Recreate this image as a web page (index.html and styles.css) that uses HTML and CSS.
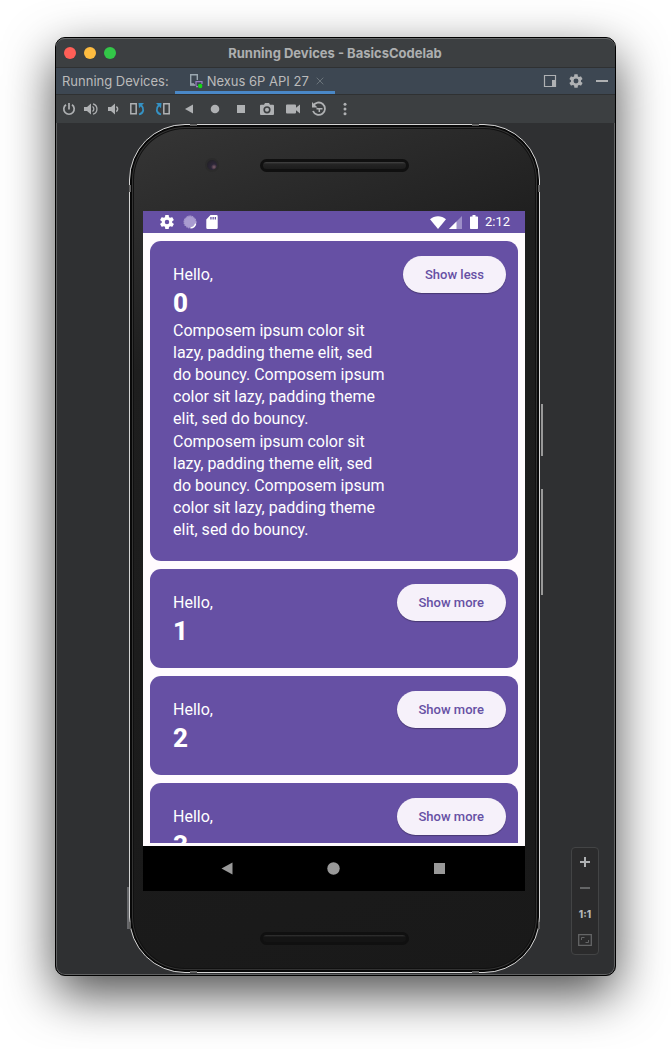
FILE: index.html
```
<!DOCTYPE html>
<html lang="en">
<head>
<meta charset="utf-8">
<title>Running Devices - BasicsCodelab</title>
<link rel="stylesheet" href="styles.css">
</head>
<body>
<main class="window">
  <header class="titlebar">
    <div class="lights">
      <button class="light close" aria-label="Close"></button>
      <button class="light minimize" aria-label="Minimize"></button>
      <button class="light maximize" aria-label="Maximize"></button>
    </div>
    <h1 class="title">Running Devices - BasicsCodelab</h1>
  </header>

  <div class="tabbar">
    <span class="tabbar-label">Running Devices:</span>
    <div class="tab">
      <svg class="tab-icon" width="15" height="16" viewBox="0 0 15 16" fill="none">
        <path d="M5 11H1.7V1.7H8.3V7" stroke="#9aa7b0" stroke-width="1.4"/>
        <path d="M1 11.2h5v1.6H1z" fill="#9aa7b0"/>
        <path d="M7 13V8.7h6V11M9 13.7H7" stroke="#9a7fc4" stroke-width="1.2"/>
        <circle cx="11.2" cy="13" r="2.2" fill="#14d814"/>
      </svg>
      <span>Nexus 6P API 27</span>
      <button class="tab-close" aria-label="Close tab">
        <svg width="8" height="8" viewBox="0 0 8 8"><path d="M.7.7l6.6 6.6M7.3.7L.7 7.3" stroke="#6b747b"/></svg>
      </button>
    </div>
    <div class="tabbar-actions">
      <button class="tool" aria-label="Window mode"><svg width="14" height="14" viewBox="0 0 14 14"><path d="M1.5 1.5h11v11h-11z" fill="none" stroke="#afb1b3" stroke-width="1.2"/><path d="M9 6h4v7H9z" fill="#afb1b3"/></svg></button>
      <button class="tool" aria-label="Settings"><svg width="16" height="16" viewBox="0 0 24 24"><path fill="#afb1b3" fill-rule="evenodd" d="M19.4 13c.1-.3.1-.7.1-1s0-.7-.1-1l2.1-1.6c.2-.2.2-.4.1-.6l-2-3.500c-.1-.2-.4-.3-.6-.2l-2.500 1a7 7 0 0 0-1.700-1L14.500 2.400c0-.2-.2-.4-.5-.4h-4c-.3 0-.5.2-.5.4l-.4 2.700a7 7 0 0 0-1.700 1l-2.500-1c-.2-.1-.5 0-.6.2l-2 3.500c-.1.2-.1.4.1.6L4.500 11v2l-2.100 1.600c-.2.200-.2.400-.1.600l2 3.500c.1.200.4.300.6.200l2.500-1c.5.400 1.100.7 1.700 1l.4 2.700c0 .2.200.4.5.4h4c.3 0 .5-.2.5-.4l.4-2.700a7 7 0 0 0 1.700-1l2.500 1c.2.100.5 0 .6-.2l2-3.500c.1-.2.1-.4-.1-.6zM12 15.700a3.700 3.700 0 1 1 0-7.400 3.700 3.700 0 0 1 0 7.400z"/></svg></button>
      <button class="tool" aria-label="Hide"><svg width="12" height="12" viewBox="0 0 12 12"><path d="M0 5h12v2H0z" fill="#afb1b3"/></svg></button>
    </div>
  </div>

  <div class="toolbar">
    <button class="tool compact" aria-label="Power"><svg width="14" height="14" viewBox="0 0 14 14" fill="none" stroke="#afb1b3" stroke-width="1.700"><path d="M7 1v6.500M4 2.800a5.200 5.200 0 1 0 6 0"/></svg></button>
    <button class="tool compact" aria-label="Volume up"><svg width="14" height="14" viewBox="0 0 14 14"><path d="M0 5h3l4-3.500v11L3 9H0z" fill="#afb1b3"/><path d="M8.500 4.500a3 3 0 0 1 0 5M9 1.800a5.400 5.400 0 0 1 0 10.400" fill="none" stroke="#afb1b3" stroke-width="1.300"/></svg></button>
    <button class="tool compact" aria-label="Volume down"><svg width="12" height="14" viewBox="0 0 12 14"><path d="M1 5h3l4-3.500v11L4 9H1z" fill="#afb1b3"/><path d="M9.300 4.500a3 3 0 0 1 0 5" fill="none" stroke="#afb1b3" stroke-width="1.500"/></svg></button>
    <button class="tool" aria-label="Rotate left"><svg width="16" height="14" viewBox="0 0 16 14" fill="none"><path d="M1.800 1.800h5.400v10H1.800z" stroke="#afb1b3" stroke-width="1.500"/><path d="M10 12.500c5-1.500 5.500-6 2-9.500" stroke="#3592c4" stroke-width="1.800"/><path d="M9.500 1h5.500L10 6.200z" fill="#3592c4"/></svg></button>
    <button class="tool" aria-label="Rotate right"><svg width="16" height="14" viewBox="0 0 16 14" fill="none"><path d="M8.800 1.800h5.400v10H8.800z" stroke="#afb1b3" stroke-width="1.500"/><path d="M6 12.500c-5-1.500-5.500-6-2-9.500" stroke="#3592c4" stroke-width="1.800"/><path d="M6.500 1H1l5 5.200z" fill="#3592c4"/></svg></button>
    <button class="tool" aria-label="Back"><svg width="10" height="10" viewBox="0 0 10 10"><path d="M9 .5v9L1 5z" fill="#afb1b3"/></svg></button>
    <button class="tool" aria-label="Home"><svg width="10" height="10" viewBox="0 0 10 10"><circle cx="5" cy="5" r="4.300" fill="#afb1b3"/></svg></button>
    <button class="tool" aria-label="Overview"><svg width="10" height="10" viewBox="0 0 10 10"><path d="M1 1h8v8H1z" fill="#afb1b3"/></svg></button>
    <button class="tool" aria-label="Take screenshot"><svg width="14" height="14" viewBox="0 0 14 14"><path fill="#afb1b3" fill-rule="evenodd" d="M1 2.800h3L5 1h4l1 1.800h3a1 1 0 0 1 1 1V12a1 1 0 0 1-1 1H1a1 1 0 0 1-1-1V3.800a1 1 0 0 1 1-1zM7 4.200a3.600 3.600 0 1 0 0 7.200 3.600 3.600 0 0 0 0-7.200z"/><circle cx="7" cy="7.800" r="2" fill="#afb1b3"/></svg></button>
    <button class="tool" aria-label="Record screen"><svg width="14" height="14" viewBox="0 0 14 14"><path fill="#afb1b3" d="M1 2.500h8a1 1 0 0 1 1 1v2.200l4-3.200v9L10 8.300v2.200a1 1 0 0 1-1 1H1a1 1 0 0 1-1-1v-7a1 1 0 0 1 1-1z"/></svg></button>
    <button class="tool" aria-label="Snapshots"><svg width="16" height="16" viewBox="0 0 16 16" fill="none" stroke="#afb1b3"><path d="M2.200 5A6.200 6.200 0 1 1 2 10" stroke-width="1.800"/><path d="M1 1v5.500h5.500z" fill="#afb1b3" stroke="none"/><path d="M5.500 7.800h6M8.300 7.800V11" stroke-width="1.500"/></svg></button>
    <button class="tool" aria-label="More"><svg width="4" height="14" viewBox="0 0 4 14" fill="#afb1b3"><circle cx="2" cy="2.300" r="1.500"/><circle cx="2" cy="7" r="1.500"/><circle cx="2" cy="11.700" r="1.500"/></svg></button>
  </div>

  <section class="stage">
    <div class="phone">
      <i class="side-key power"></i>
      <i class="side-key volume"></i>
      <i class="side-key sim"></i>
      <i class="antenna top left"></i><i class="antenna top right"></i>
      <i class="antenna bottom left"></i><i class="antenna bottom right"></i>
      <i class="seam top left"></i><i class="seam top right"></i>
      <i class="seam bottom left"></i><i class="seam bottom right"></i>
      <div class="bezel-top">
        <span class="camera"></span>
        <span class="speaker"></span>
      </div>
      <div class="screen">
        <div class="statusbar">
          <svg width="14" height="14" viewBox="2 2 20 20"><path fill="#fff" fill-rule="evenodd" d="M19.400 13c.1-.7.1-1.300 0-2l2.100-1.600c.2-.2.2-.4.1-.6l-2-3.500c-.1-.2-.4-.3-.6-.2l-2.500 1a7 7 0 0 0-1.700-1L14.500 2.400c0-.2-.2-.4-.5-.4h-4c-.3 0-.5.2-.5.4l-.4 2.700a7 7 0 0 0-1.700 1l-2.500-1c-.2-.1-.5 0-.6.2l-2 3.500c-.1.200-.1.400.1.600L4.500 11v2l-2.100 1.600c-.2.200-.2.400-.1.600l2 3.500c.1.200.4.300.6.200l2.500-1c.5.400 1.100.7 1.700 1l.4 2.700c0 .2.200.4.5.4h4c.3 0 .5-.2.500-.4l.4-2.700a7 7 0 0 0 1.700-1l2.500 1c.2.100.5 0 .6-.2l2-3.500c.1-.2.1-.4-.1-.6zM12 15.200a3.200 3.200 0 1 1 0-6.400 3.200 3.200 0 0 1 0 6.400z"/></svg>
          <svg width="14" height="14" viewBox="0 0 14 14"><circle cx="7" cy="7" r="5.800" fill="#a99bd0"/><circle cx="7" cy="7" r="6" fill="none" stroke="#d0c8e6" stroke-width="1" stroke-dasharray="1 1"/><path d="M12.700 8.500a6 6 0 0 1-5 4.400" fill="none" stroke="#fff" stroke-width="1.400"/></svg>
          <svg width="12" height="14" viewBox="0 0 12 14"><path fill="#fff" fill-rule="evenodd" d="M4.500 0H10.500a1.200 1.200 0 0 1 1.200 1.200v11.500a1.200 1.200 0 0 1-1.200 1.200h-9A1.200 1.200 0 0 1 .3 12.700V4.500zM4.300 2v2.500h1.300V2zM6.500 2v2.500h1.300V2zM8.700 2v2.500H10V2z"/></svg>
          <span class="status-right">
            <svg width="16" height="13" viewBox="0 0 16 13"><path fill="#fff" d="M8 13L0 3.200C4.500-.8 11.500-.8 16 3.200z"/></svg>
            <svg class="signal" width="13" height="13" viewBox="0 0 13 13"><path d="M13 0v13H0z" fill="#9d8fc8"/><path d="M7.500 5.500V13H0z" fill="#fff"/></svg>
            <svg class="battery" width="8" height="14" viewBox="0 0 8 14"><path fill="#fff" d="M2.500 0h3v1.400H7.300a.7.700 0 0 1 .7.700V13.300a.7.700 0 0 1-.7.700H.7a.7.700 0 0 1-.7-.7V2.100a.7.700 0 0 1 .7-.7h1.800z"/></svg>
            <span class="clock">2:12</span>
          </span>
        </div>
        <div class="list">
          <article class="card">
            <div class="card-text">
              <p>Hello,</p>
              <h2 class="number">0</h2>
              <p>Composem ipsum color sit lazy, padding theme elit, sed do bouncy. Composem ipsum color sit lazy, padding theme elit, sed do bouncy.</p>
              <p class="repeat">Composem ipsum color sit lazy, padding theme elit, sed do bouncy. Composem ipsum color sit lazy, padding theme elit, sed do bouncy.</p>
            </div>
            <button class="pill">Show less</button>
          </article>
          <article class="card">
            <div class="card-text"><p>Hello,</p><h2 class="number">1</h2></div>
            <button class="pill">Show more</button>
          </article>
          <article class="card">
            <div class="card-text"><p>Hello,</p><h2 class="number">2</h2></div>
            <button class="pill">Show more</button>
          </article>
          <article class="card">
            <div class="card-text"><p>Hello,</p><h2 class="number">3</h2></div>
            <button class="pill">Show more</button>
          </article>
        </div>
        <nav class="navbar">
          <button class="nav-key" aria-label="Back"><svg width="12" height="13" viewBox="0 0 12 13"><path d="M11.500.5v12L.5 6.500z" fill="#999"/></svg></button>
          <button class="nav-key" aria-label="Home"><svg width="13" height="13" viewBox="0 0 13 13"><circle cx="6.500" cy="6.500" r="6.200" fill="#999"/></svg></button>
          <button class="nav-key" aria-label="Overview"><svg width="11" height="11" viewBox="0 0 11 11"><path d="M0 0h11v11H0z" fill="#999"/></svg></button>
        </nav>
      </div>
      <div class="bezel-bottom"><span class="speaker"></span></div>
    </div>
    <div class="zoom">
      <button class="zoom-key" aria-label="Zoom in"><svg width="10" height="10" viewBox="0 0 10 10"><path d="M4 0h2v4h4v2H6v4H4V6H0V4h4z" fill="#afb1b3"/></svg></button>
      <button class="zoom-key" aria-label="Zoom out"><svg width="10" height="10" viewBox="0 0 10 10"><path d="M0 4h10v2H0z" fill="#646566"/></svg></button>
      <button class="zoom-key">1:1</button>
      <button class="zoom-key" aria-label="Fit to screen"><svg width="14" height="12" viewBox="0 0 14 12" fill="none" stroke="#646566"><path d="M.7.7h12.600v10.600H.7z" stroke-width="1.300"/><path d="M3.500 6V3.500H6.500M10.500 6v2.500H7.500"/></svg></button>
    </div>
  </section>
</main>
</body>
</html>
```
FILE: styles.css
```
* { box-sizing: border-box; }

body {
  margin: 0;
  height: 100vh;
  padding: 37px 55px 73px;
  background: #fff;
  font: 13px/16px Inter, "Liberation Sans", sans-serif;
  color: #bbb;
}

button {
  margin: 0;
  padding: 0;
  border: 0;
  background: none;
  font: inherit;
  color: inherit;
}

h1, h2, p { margin: 0; }
svg { display: block; flex: none; }

.window {
  display: flex;
  flex-direction: column;
  height: 100%;
  border: 1px solid #000;
  border-radius: 10px;
  background: #2f3032;
  box-shadow: 0 18px 50px rgba(0, 0, 0, .7), inset 0 0 0 1px #606162;
}

.titlebar {
  display: grid;
  grid-template-columns: 1fr auto 1fr;
  align-items: center;
  height: 30px;
  padding: 0 9px 0 8px;
  border-radius: 9px 9px 0 0;
  border-top: 1px solid #6a6c6d;
  border-bottom: 1px solid #2f3132;
  background: #3c3f41;
}
.lights { display: flex; gap: 8px; }
.light { width: 12px; height: 12px; border-radius: 50%; }
.close { background: #ff5f57; }
.minimize { background: #febc40; }
.maximize { background: #33c748; }
.title { font-size: 13px; font-weight: 700; color: #adafb0; }

.tabbar {
  display: flex;
  height: 27px;
  padding-left: 6px;
  border-bottom: 1px solid #2f3132;
  background: #3d4752;
}
.tabbar-label { align-self: center; }
.tab {
  display: flex;
  align-items: center;
  gap: 3px;
  margin-left: 6px;
  padding: 2px 11px 0 14px;
  border-bottom: 3px solid #4a88c7;
  white-space: nowrap;
}
.tab-close { margin-left: 4px; }
.tabbar-actions { display: flex; margin-left: auto; }

.toolbar {
  display: flex;
  height: 28px;
  padding-left: 2px;
  background: #3c3f41;
}
.tool {
  display: flex;
  align-items: center;
  justify-content: center;
  width: 26px;
}
.compact { width: 22px; }

.stage {
  position: relative;
  display: flex;
  flex: 1;
  min-height: 0;
  padding: 1px 75px 2px 73px;
}

.phone {
  position: relative;
  display: flex;
  flex: 1;
  flex-direction: column;
  min-width: 0;
  padding: 0 14px 0 13px;
  border: 1px solid #d4d4d4;
  border-radius: 56px;
  background: linear-gradient(160deg, #363636, #1e1e1e 25%, #191919);
  box-shadow: inset 0 0 0 2px #080808, inset 0 0 0 3px #333, inset 0 0 0 4px #111;
}
.side-key { position: absolute; background: #999; width: 2px; right: -4px; }
.power { top: 279px; height: 52px; }
.volume { top: 364px; height: 106px; }
.sim { right: auto; left: -3px; bottom: 43px; height: 42px; background: #66676a; }
.antenna, .seam { position: absolute; background: #606060; }
.antenna { width: 7px; height: 2px; }
.seam { width: 2px; height: 7px; }
.antenna.top { top: -1px; }
.antenna.bottom { bottom: -1px; }
.antenna.left { left: 60px; }
.antenna.right { right: 60px; }
.seam.top { top: 60px; }
.seam.bottom { bottom: 43px; }
.seam.left { left: -1px; }
.seam.right { right: -1px; }

.bezel-top, .bezel-bottom {
  display: grid;
  grid-template-columns: 1fr 149px 1fr;
  align-items: center;
  flex: none;
}
.bezel-top { height: 86px; padding-bottom: 6px; }
.bezel-bottom { height: 81px; padding-top: 14px; }
.speaker {
  grid-column: 2;
  height: 13px;
  border: 3px solid #101010;
  border-radius: 7px;
  background: linear-gradient(#444, #242424 30%, #1c1c1c);
}
.bezel-bottom .speaker { background: linear-gradient(#333, #141414 30%); }
.camera {
  justify-self: end;
  width: 14px;
  height: 14px;
  margin-right: 41px;
  border: 2px solid #2b2b2b;
  border-radius: 50%;
  background: radial-gradient(circle at 70% 70%, #80606c, #2c2638 30%, #202020);
}

.screen {
  display: flex;
  flex: 1;
  flex-direction: column;
  min-height: 0;
  background: #fffbfe;
  font-family: Roboto, "Noto Sans", sans-serif;
}
.statusbar {
  display: flex;
  align-items: center;
  gap: 9px;
  flex: none;
  height: 22px;
  padding: 0 15px 0 17px;
  background: #6650a4;
  color: #fff;
}
.status-right { display: flex; align-items: center; margin-left: auto; }
.clock { font-size: 13px; font-weight: 400; }
.signal { margin-left: 3px; }
.battery { margin: 0 7px 0 8px; }

.list {
  display: flex;
  flex: 1;
  flex-direction: column;
  gap: 8px;
  min-height: 0;
  margin-bottom: 3px;
  padding: 8px 7px 0;
  overflow: hidden;
}
.card {
  display: flex;
  align-items: flex-start;
  flex: none;
  padding: 0 12px 0 23px;
  border-radius: 11px;
  background: #6650a4;
  color: #fff;
  font-size: 16px;
  line-height: 22px;
}
.card-text { flex: 1; padding: 23px 0 20px; margin-right: 12px; }
.card-text p { max-width: 216px; }
.number { font-size: 26px; font-weight: 800; line-height: 34px; }
.repeat { margin-top: 1px; }
.pill {
  flex: none;
  height: 37px;
  margin-top: 15px;
  padding: 0 22px;
  border-radius: 19px;
  background: #f6f1fa;
  box-shadow: 0 1px 1px rgba(0, 0, 0, .3);
  color: #6650a4;
  font-size: 13px;
  font-weight: 500;
}

.navbar {
  display: flex;
  flex: none;
  height: 45px;
  padding: 0 33px 0 31px;
  background: #000;
}
.nav-key { display: flex; flex: 1; align-items: center; justify-content: center; }

.zoom {
  position: absolute;
  right: 16px;
  bottom: 20px;
  display: flex;
  flex-direction: column;
  width: 28px;
  padding: 1px 0;
  border: 1px solid #434445;
  border-radius: 4px;
  background: #2b2b2c;
}
.zoom-key {
  display: flex;
  align-items: center;
  justify-content: center;
  height: 26px;
  color: #b4b6b8;
  font-size: 10px;
  font-weight: 800;
}
```
